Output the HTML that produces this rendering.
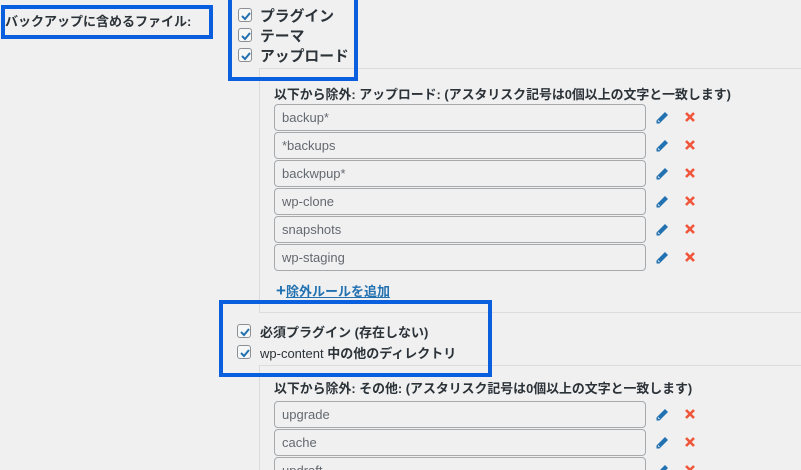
<!DOCTYPE html>
<html><head><meta charset="utf-8"><style>
*{box-sizing:border-box;margin:0;padding:0}
html,body{width:801px;height:470px;overflow:hidden}
body{background:#f0f0f1;font-family:"Liberation Sans","Noto Sans CJK JP",sans-serif;color:#2c3338;font-size:13px;position:relative}
.a{position:absolute}
.blue{position:absolute;border:4px solid #0a5fde}
.cb{position:absolute;width:14px;height:14px;border:1px solid #8c8f94;border-radius:3px;background:#f6f7f7}
.cb svg{position:absolute;left:0;top:0}
.lbl{position:absolute;font-weight:bold;font-size:13px;white-space:nowrap}
.panel{position:absolute;left:259px;border:1px solid #dcdcde;border-right:none;background:#f0f0f1}
.in{position:absolute;left:274px;width:372px;height:27px;border:1px solid #a7aaad;border-radius:4px;background:#f0f0f1;color:#646970;font-size:13px;padding:5px 7px;line-height:15px}
.ic{position:absolute}
.hd{position:absolute;left:274px;font-weight:bold;font-size:12.9px;white-space:nowrap}
</style></head><body>
<div class="blue" style="left:1px;top:5px;width:212px;height:34px"></div>
<div class="lbl" style="left:5px;top:11px">バックアップに含めるファイル:</div>

<div class="panel" style="top:68px;height:245px;width:542px"></div>
<div class="panel" style="top:365px;height:110px;width:542px"></div>

<div class="blue" style="left:228px;top:0px;width:130px;height:81px;border-top:none"></div>

<div class="cb" style="left:238px;top:8px"><svg width="14" height="14"><path d="M3 7l3 3 5-6" stroke="#2271b1" stroke-width="2" fill="none"/></svg></div>
<div class="lbl" style="left:260px;top:5px;font-size:14.8px">プラグイン</div>
<div class="cb" style="left:238px;top:28px"><svg width="14" height="14"><path d="M3 7l3 3 5-6" stroke="#2271b1" stroke-width="2" fill="none"/></svg></div>
<div class="lbl" style="left:260px;top:25px;font-size:14.8px">テーマ</div>
<div class="cb" style="left:238px;top:48px"><svg width="14" height="14"><path d="M3 7l3 3 5-6" stroke="#2271b1" stroke-width="2" fill="none"/></svg></div>
<div class="lbl" style="left:260px;top:45px;font-size:14.8px">アップロード</div>

<div class="hd" style="top:84px">以下から除外: アップロード: (アスタリスク記号は0個以上の文字と一致します)</div>

<div class="a" style="left:276px;top:281px;color:#2271b1;font-weight:bold;font-size:13px;white-space:nowrap"><span style="font-size:17px;line-height:14px">+</span><span style="text-decoration:underline">除外ルールを追加</span></div>

<div class="blue" style="left:219px;top:300px;width:273px;height:77px"></div>
<div class="cb" style="left:237px;top:324px"><svg width="14" height="14"><path d="M3 7l3 3 5-6" stroke="#2271b1" stroke-width="2" fill="none"/></svg></div>
<div class="lbl" style="left:260px;top:322px">必須プラグイン (存在しない)</div>
<div class="cb" style="left:237px;top:345px"><svg width="14" height="14"><path d="M3 7l3 3 5-6" stroke="#2271b1" stroke-width="2" fill="none"/></svg></div>
<div class="lbl" style="left:260px;top:343px"><span style="font-weight:normal">wp-content</span> 中の他のディレクトリ</div>

<div class="hd" style="top:378px">以下から除外: その他: (アスタリスク記号は0個以上の文字と一致します)</div>

<script>
function rows(list,top){var h='';list.forEach(function(t,i){var y=top+i*28;
h+='<div class="in" style="top:'+y+'px">'+t+'</div>'+
'<svg class="ic" style="left:655px;top:'+(y+6)+'px" width="15" height="15" viewBox="0 0 15 15"><path d="M1.5 10.5L10 2l3 3-8.5 8.5H1.5z" fill="#2271b1"/><path d="M3 10.5l1.5 1.5" stroke="#f0f0f1" stroke-width="1"/></svg>'+
'<svg class="ic" style="left:684px;top:'+(y+7)+'px" width="12" height="12" viewBox="0 0 12 12"><path d="M2 2l8 8M10 2l-8 8" stroke="#f0563a" stroke-width="2.6"/></svg>';});
document.write(h);}
rows(['backup*','*backups','backwpup*','wp-clone','snapshots','wp-staging'],104);
rows(['upgrade','cache','updraft'],401);
</script>
</body></html>
